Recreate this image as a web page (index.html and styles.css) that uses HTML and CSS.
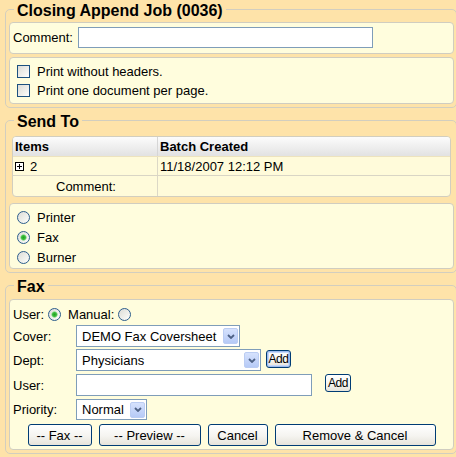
FILE: index.html
```html
<!DOCTYPE html>
<html lang="en">
<head>
<meta charset="utf-8">
<title>Closing Append Job</title>
<link rel="stylesheet" href="styles.css">
</head>
<body>
<fieldset class="group">
  <legend>Closing Append Job (0036)</legend>
  <div class="panel comment-panel">
    <label class="lbl" for="cmt">Comment:</label><input id="cmt" type="text" class="txt comment-input">
  </div>
  <div class="panel check-panel">
    <label class="opt"><input type="checkbox" class="chk">Print without headers.</label>
    <label class="opt"><input type="checkbox" class="chk">Print one document per page.</label>
  </div>
</fieldset>

<fieldset class="group">
  <legend>Send To</legend>
  <div class="grid">
    <div class="grid-row head"><div class="c1">Items</div><div class="c2">Batch Created</div></div>
    <div class="grid-row r1">
      <div class="c1"><svg class="expand" width="9" height="9" viewBox="0 0 9 9"><rect x="0.5" y="0.5" width="8" height="8" fill="#fff" stroke="#000"/><path d="M2 4.5h5M4.5 2v5" stroke="#000"/></svg>2</div>
      <div class="c2">11/18/2007 12:12 PM</div>
    </div>
    <div class="grid-row r2"><div class="c1 indent">Comment:</div><div class="c2"></div></div>
  </div>
  <div class="panel radio-panel">
    <label class="opt"><input type="radio" name="dest" class="rad">Printer</label>
    <label class="opt"><input type="radio" name="dest" class="rad" checked>Fax</label>
    <label class="opt"><input type="radio" name="dest" class="rad">Burner</label>
  </div>
</fieldset>

<fieldset class="group">
  <legend>Fax</legend>
  <div class="panel fax-panel">
    <div class="mode-row">
      <span>User:</span><input type="radio" name="mode" class="rad mode-user" checked><span>Manual:</span><input type="radio" name="mode" class="rad mode-manual">
    </div>
    <div class="form-row row-cover">
      <span class="flabel">Cover:</span>
      <span class="sel w-cover"><select><option>DEMO Fax Coversheet</option></select><span class="arrow"><svg width="8" height="5" viewBox="0 0 8 5"><polyline points="1,1 4,4 7,1" fill="none" stroke="#4D6185" stroke-width="1.8"/></svg></span></span>
    </div>
    <div class="form-row row-dept">
      <span class="flabel">Dept:</span>
      <span class="sel w-dept"><select><option>Physicians</option></select><span class="arrow"><svg width="8" height="5" viewBox="0 0 8 5"><polyline points="1,1 4,4 7,1" fill="none" stroke="#4D6185" stroke-width="1.8"/></svg></span></span>
      <button class="btn small focus add-dept">Add</button>
    </div>
    <div class="form-row row-user">
      <span class="flabel">User:</span>
      <input type="text" class="txt user-input">
      <button class="btn small add-user">Add</button>
    </div>
    <div class="form-row row-priority">
      <span class="flabel">Priority:</span>
      <span class="sel w-priority"><select><option>Normal</option></select><span class="arrow"><svg width="8" height="5" viewBox="0 0 8 5"><polyline points="1,1 4,4 7,1" fill="none" stroke="#4D6185" stroke-width="1.8"/></svg></span></span>
    </div>
    <div class="actions">
      <button class="btn b-fax">-- Fax --</button>
      <button class="btn b-preview">-- Preview --</button>
      <button class="btn b-cancel">Cancel</button>
      <button class="btn b-remove">Remove &amp; Cancel</button>
    </div>
  </div>
</fieldset>
</body>
</html>
```

FILE: styles.css
```css
* { box-sizing: border-box; }

html {
  overflow: hidden;
}

body {
  margin: 0;
  padding: 0 0 0 5px;
  background: #FEE3A9;
  font: 13px "Liberation Sans", Arial, sans-serif;
  color: #000;
}

.group {
  width: 452px;
  min-inline-size: 0;
  margin: 0 0 3px;
  padding: 3px 2px 3px 3px;
  border: 1px solid #D2CEBF;
  border-radius: 5px;
}

.group legend {
  margin-left: 5px;
  padding: 3px 3px 0;
  font-size: 16px;
  font-weight: bold;
  line-height: 16px;
  color: #000;
}

.panel {
  background: #FFFDDD;
  border: 1px solid #D0CDC0;
  border-radius: 4px;
}

.panel + .panel { margin-top: 3px; }

.comment-panel {
  display: flex;
  align-items: center;
  padding: 4px 3px 5px;
}

.txt {
  border: 1px solid #7F9DB9;
  background: #fff;
  font: inherit;
  padding: 0 2px;
  outline: none;
  border-radius: 0;
}

.comment-input {
  margin-left: 5px;
  width: 295px;
  height: 21px;
}

.check-panel { padding: 4px 7px 3px; }

.opt {
  display: flex;
  align-items: center;
  height: 19px;
}

.radio-panel { padding: 3px 7px 1px; }
.radio-panel .opt { height: 20px; }

.chk, .rad {
  appearance: none;
  -webkit-appearance: none;
  width: 13px;
  height: 13px;
  margin: 0 7px 0 0;
  border: 1px solid #1C5180;
  background: linear-gradient(135deg, #DCDCD7 0%, #F4F4F0 70%, #FFFFFF 100%);
  flex: none;
}

.rad {
  border-radius: 50%;
  border-color: #2C5D8C;
}

.rad:checked {
  background:
    radial-gradient(circle at 50% 50%, #21A121 0, #3CBD3C 2px, #A8E0A8 3px, transparent 3.5px),
    linear-gradient(135deg, #DCDCD7 0%, #F4F4F0 70%, #FFFFFF 100%);
}

/* Send-to grid */
.grid {
  margin: 3px 3px 6px;
  border: 1px solid #D2CEBF;
  border-radius: 4px;
  overflow: hidden;
  background: #FFFBDA;
}

.grid-row {
  display: grid;
  grid-template-columns: 145px 1fr;
}

.grid-row > div {
  display: flex;
  align-items: center;
  padding-left: 2px;
}

.grid-row .c1 { border-right: 1px solid #DCD8C6; }

.head {
  height: 20px;
  background: linear-gradient(#FCFCFC, #E2E2E2);
  font-weight: bold;
  border-bottom: 1px solid #EDE3BE;
}

.head .c1 { border-right-color: #D6D6D6; }

.r1 {
  height: 19px;
  border-bottom: 1px solid #D9D5C5;
}

.r2 { height: 20px; }

.expand { margin-right: 6px; flex: none; }

.grid-row .indent { padding-left: 43px; }

/* Fax panel */
.fax-panel {
  margin-top: 1px;
  padding: 4px 3px 3px;
}

.mode-row {
  display: flex;
  align-items: center;
  height: 20px;
  margin-bottom: 1px;
}

.mode-user { margin: 0 7px 0 4px; }
.mode-manual { margin: 0 0 0 4px; }

.form-row {
  display: flex;
  align-items: center;
  height: 22px;
}

.row-dept { margin-top: 2px; }
.row-user { margin-top: 3px; }
.row-priority { margin-top: 3px; height: 21px; }

.flabel { width: 63px; flex: none; }

.sel {
  display: inline-flex;
  align-items: center;
  height: 100%;
  border: 1px solid #7F9DB9;
  background: #fff;
  flex: none;
}

.sel select {
  appearance: none;
  -webkit-appearance: none;
  border: 0;
  background: transparent;
  font: inherit;
  color: #000;
  padding: 0 0 0 5px;
  margin: 0;
  flex: 1;
  min-width: 0;
  height: 100%;
  outline: none;
}

.arrow {
  width: 15px;
  height: 16px;
  margin-right: 1px;
  border: 1px solid #BBCDF3;
  border-radius: 2px;
  background: linear-gradient(#D6E2FD, #B6CAF6);
  display: flex;
  align-items: center;
  justify-content: center;
  flex: none;
}

.w-cover { width: 164px; }
.w-dept { width: 185px; }
.w-priority { width: 71px; }

.user-input {
  width: 236px;
  height: 22px;
}

.btn {
  height: 22px;
  border: 1px solid #003C74;
  border-radius: 3px;
  background: linear-gradient(#FFFFFF 0%, #F5F4F0 55%, #E6E3DA 100%);
  font: 13px "Liberation Sans", Arial, sans-serif;
  color: #000;
  padding: 0;
  flex: none;
}

.btn.small {
  height: 18px;
  font-size: 12px;
  letter-spacing: -0.4px;
  padding: 0 1px;
  align-self: flex-start;
}

.add-dept {
  width: 25px;
  margin: 1px 0 0 5px;
}

.add-user {
  width: 26px;
  margin-left: 13px;
}

.btn.focus {
  box-shadow: inset 0 0 0 1px #9DBBEE, inset 0 0 0 2px #C6D8F8;
}

.actions {
  display: flex;
  justify-content: center;
  gap: 7px;
  margin-top: 4px;
}

.b-fax { width: 64px; }
.b-preview { width: 102px; }
.b-cancel { width: 60px; }
.b-remove { width: 161px; }
```
